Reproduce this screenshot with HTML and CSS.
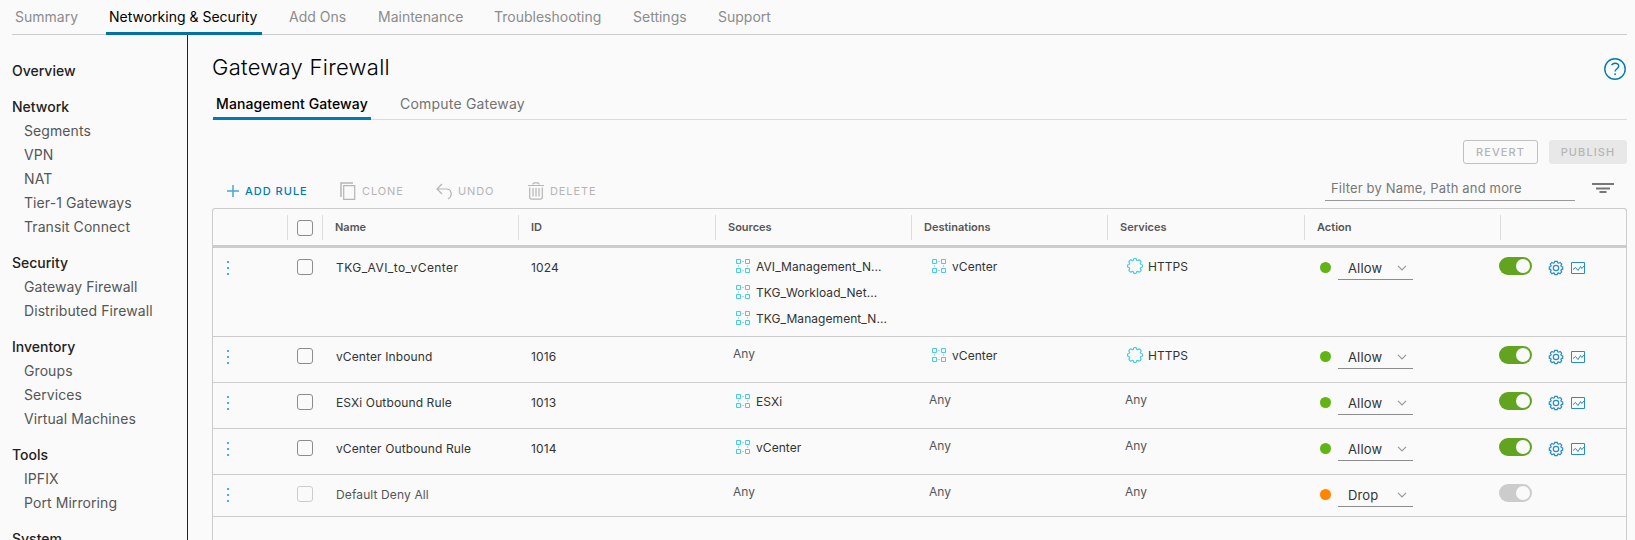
FILE: index.html
```html
<!DOCTYPE html>
<html lang="en">
<head>
<meta charset="utf-8">
<title>Gateway Firewall</title>
<link rel="stylesheet" href="styles.css">
</head>
<body>
<svg class="sprite" aria-hidden="true">
  <symbol id="group" viewBox="0 0 16 16"><g fill="none" stroke="#49cbe0"><path d="M1.500 1.500h4v4h-4zM10.500 1.500h4v4h-4zM1.500 10.500h4v4h-4zM10.500 10.500h4v4h-4z"/><path opacity=".55" d="M7 3.500h2M7 12.500h2M3.500 7v2M12.500 7v2"/></g></symbol>
  <symbol id="service" viewBox="0 0 16 16"><path fill="none" stroke="#49cbe0" stroke-width="1.200" d="M6.500 1.800a1.500 1.300 0 0 1 3 0q.3 1 1.300.8a1.600 1.600 0 0 1 2.600 2.600q-.2 1 .8 1.300a1.300 1.500 0 0 1 0 3q-1 .3-.8 1.300a1.600 1.600 0 0 1-2.600 2.600q-1-.2-1.300.8a1.500 1.300 0 0 1-3 0q-.3-1-1.300-.8a1.600 1.600 0 0 1-2.600-2.600q.2-1-.8-1.300a1.300 1.500 0 0 1 0-3q1-.3.8-1.300a1.600 1.600 0 0 1 2.600-2.600q1 .2 1.300-.8z"/></symbol>
  <symbol id="gear" viewBox="0 0 16 16"><g fill="none" stroke="#2a8cc4"><path stroke-width="1.200" d="M6.700 1.300h2.600l.4 1.500 1 .4 1.400-.8 1.600 1.700-.8 1.400.4 1 1.400.4v2.300l-1.400.4-.4 1 .8 1.400-1.700 1.700-1.400-.8-1 .4-.4 1.400H6.800l-.4-1.400-1-.4-1.400.8L2.300 12l.8-1.400-.4-1-1.400-.4V6.900l1.400-.4.4-1L2.300 4.100 4 2.400l1.400.8 1-.4z"/><circle cx="8" cy="8" r="2.700" stroke-width="1.200"/></g></symbol>
  <symbol id="chart" viewBox="0 0 16 14"><g fill="none" stroke="#2a8cc4"><path d="M1.500 1.500h13v11h-13z"/><path d="M3 8.500 5.500 6.500 8 9.500l2.500-4 1.300 2L14 5"/></g></symbol>
  <symbol id="chevron" viewBox="0 0 10 6"><path fill="none" stroke="#999" stroke-width="1.200" d="m1 .8 4 4 4-4"/></symbol>
</svg>

<nav class="topnav">
  <a class="n1">Summary</a><a class="n2 active">Networking &amp; Security</a><a class="n3">Add Ons</a><a class="n4">Maintenance</a><a class="n5">Troubleshooting</a><a class="n6">Settings</a><a class="n7">Support</a>
</nav>

<div class="body">
  <aside class="sidebar">
    <h4>Overview</h4>
    <h4>Network</h4>
    <a>Segments</a><a>VPN</a><a>NAT</a><a>Tier-1 Gateways</a><a>Transit Connect</a>
    <h4>Security</h4>
    <a>Gateway Firewall</a><a>Distributed Firewall</a>
    <h4>Inventory</h4>
    <a>Groups</a><a>Services</a><a>Virtual Machines</a>
    <h4>Tools</h4>
    <a>IPFIX</a><a>Port Mirroring</a>
    <h4>System</h4>
  </aside>

  <main class="main">
    <header class="title">
      <h1>Gateway Firewall</h1>
      <svg class="help" viewBox="0 0 22 22"><g fill="none" stroke="#0079b8" stroke-width="1.400"><circle cx="11" cy="11" r="10.200"/><path d="M7.500 7.100C8.500 5.800 9.700 5.300 11 5.300c2.200 0 3.700 1.100 3.700 2.800 0 2.700-3.600 2.600-3.600 5.500"/></g><circle cx="11.100" cy="16.200" r=".9" fill="#0079b8"/></svg>
    </header>
    <div class="tabs"><a class="active">Management Gateway</a><a class="second">Compute Gateway</a></div>
    <div class="buttons"><button class="revert">REVERT</button><button class="publish">PUBLISH</button></div>
    <div class="toolbar">
      <span class="tool add"><svg width="12" height="12"><path d="M6 0v12M0 6h12" stroke="#4aa5cf" stroke-width="1.500"/></svg>ADD RULE</span>
      <span class="tool clone"><svg width="16" height="18"><g fill="none" stroke="#b5b5b5"><path d="M1 15V1h12" stroke-width="1.500"/><path d="M3.700 3.700h11v13.600h-11z" stroke-width="1.200"/></g></svg>CLONE</span>
      <span class="tool undo"><svg width="16" height="18"><path fill="none" stroke="#b5b5b5" stroke-width="1.200" d="M6 2 1 7l5 5M1 7h9c6 0 7 7 2 10"/></svg>UNDO</span>
      <span class="tool delete"><svg width="16" height="18"><g fill="none" stroke="#b5b5b5" stroke-width="1.200"><path d="M0 3.500h16M5 2.500q0-1.700 1.500-1.700h3q1.500 0 1.500 1.700"/><path d="M1.700 5.500V15q0 2.200 2 2.200h8.600q2 0 2-2.200V5.500M5 6v8.500M8 6v8.500M11 6v8.500"/></g></svg>DELETE</span>
      <span class="filter">Filter by Name, Path and more</span>
      <svg class="funnel" width="22" height="10"><path d="M0 1h22M4 5.500h14M7.500 9h7" stroke="#777" stroke-width="2"/></svg>
    </div>

    <section class="grid">
      <div class="row head"><div></div><div class="sep"><i class="box"></i></div><div class="sep">Name</div><div class="sep">ID</div><div class="sep">Sources</div><div class="sep">Destinations</div><div class="sep">Services</div><div class="sep">Action</div><div class="sep"></div></div>

      <div class="row tall">
        <div class="dots"><i></i><i></i><i></i></div><div><i class="box"></i></div><div class="name wide">TKG_AVI_to_vCenter</div><div class="id">1024</div>
        <div class="items"><span><svg><use href="#group"/></svg>AVI_Management_N...</span><span><svg><use href="#group"/></svg>TKG_Workload_Net...</span><span><svg><use href="#group"/></svg>TKG_Management_N...</span></div>
        <div class="items"><span><svg><use href="#group"/></svg>vCenter</span></div>
        <div class="items"><span><svg><use href="#service"/></svg>HTTPS</span></div>
        <div class="action"><b></b><span class="select">Allow<svg><use href="#chevron"/></svg></span></div>
        <div class="controls"><i class="toggle"></i><svg class="gear"><use href="#gear"/></svg><svg class="chart"><use href="#chart"/></svg></div>
      </div>

      <div class="row">
        <div class="dots"><i></i><i></i><i></i></div><div><i class="box"></i></div><div class="name">vCenter Inbound</div><div class="id">1016</div>
        <div class="any">Any</div>
        <div class="items"><span><svg><use href="#group"/></svg>vCenter</span></div>
        <div class="items"><span><svg><use href="#service"/></svg>HTTPS</span></div>
        <div class="action"><b></b><span class="select">Allow<svg><use href="#chevron"/></svg></span></div>
        <div class="controls"><i class="toggle"></i><svg class="gear"><use href="#gear"/></svg><svg class="chart"><use href="#chart"/></svg></div>
      </div>

      <div class="row">
        <div class="dots"><i></i><i></i><i></i></div><div><i class="box"></i></div><div class="name">ESXi Outbound Rule</div><div class="id">1013</div>
        <div class="items"><span><svg><use href="#group"/></svg>ESXi</span></div>
        <div class="any">Any</div>
        <div class="any">Any</div>
        <div class="action"><b></b><span class="select">Allow<svg><use href="#chevron"/></svg></span></div>
        <div class="controls"><i class="toggle"></i><svg class="gear"><use href="#gear"/></svg><svg class="chart"><use href="#chart"/></svg></div>
      </div>

      <div class="row">
        <div class="dots"><i></i><i></i><i></i></div><div><i class="box"></i></div><div class="name">vCenter Outbound Rule</div><div class="id">1014</div>
        <div class="items"><span><svg><use href="#group"/></svg>vCenter</span></div>
        <div class="any">Any</div>
        <div class="any">Any</div>
        <div class="action"><b></b><span class="select">Allow<svg><use href="#chevron"/></svg></span></div>
        <div class="controls"><i class="toggle"></i><svg class="gear"><use href="#gear"/></svg><svg class="chart"><use href="#chart"/></svg></div>
      </div>

      <div class="row last">
        <div class="dots"><i></i><i></i><i></i></div><div><i class="box"></i></div><div class="name">Default Deny All</div><div class="id"></div>
        <div class="any">Any</div>
        <div class="any">Any</div>
        <div class="any">Any</div>
        <div class="action drop"><b></b><span class="select">Drop<svg><use href="#chevron"/></svg></span></div>
        <div class="controls"><i class="toggle off"></i></div>
      </div>
    </section>
  </main>
</div>
</body>
</html>
```
FILE: styles.css
```css
* { box-sizing: border-box; }
body { margin: 0; height: 540px; overflow: hidden; background: #fafafa; color: #333; font-family: Inter, "Open Sans", sans-serif; font-size: 14px; display: flex; flex-direction: column; }
svg { display: block; flex: none; }
i { display: block; font-style: normal; }
h1, h4 { margin: 0; }
.sprite { position: absolute; width: 0; height: 0; }

.topnav { display: flex; flex: none; height: 35px; margin: 0 8px 0 12px; border-bottom: 1px solid #ccc; color: #8c8c8c; }
.topnav a { height: 35px; line-height: 34px; padding-left: 3px; white-space: nowrap; }
.topnav .active { color: #000; border-bottom: 3px solid #0072a3; }
.n1 { width: 94px; }
.n2 { width: 156px; margin-right: 24px; }
.n3 { width: 89px; }
.n4 { width: 116px; }
.n5 { width: 139px; }
.n6 { width: 85px; }

.body { display: flex; flex: 1; min-height: 0; }
.sidebar { flex: none; width: 188px; height: 505px; overflow: hidden; padding: 24px 0 0 12px; border-right: 1px solid #222; color: #565656; }
.sidebar h4 { height: 24px; line-height: 24px; font-size: 14px; font-weight: 500; color: #222; margin-bottom: 0; }
.sidebar h4:not(:first-child) { margin-top: 12px; }
.sidebar a { display: block; height: 24px; line-height: 24px; padding-left: 12px; letter-spacing: .080px; }

.main { flex: 1; display: flex; flex-direction: column; padding: 0 8px 0 24px; min-width: 0; }
.title { flex: none; height: 54px; display: flex; justify-content: space-between; padding-top: 18px; }
.title h1 { font-size: 22px; line-height: 28px; font-weight: 300; color: #000; letter-spacing: .280px; }
.help { width: 22px; height: 22px; margin: 5px 1px 0 0; }
.tabs { flex: none; height: 31px; display: flex; border-bottom: 1px solid #dcdcdc; color: #737373; }
.tabs a { height: 31px; line-height: 30px; padding-left: 3px; white-space: nowrap; letter-spacing: .100px; }
.tabs .active { width: 158px; margin-left: 1px; color: #000; font-weight: 500; border-bottom: 3px solid #0079b8; }
.tabs .second { margin-left: 26px; letter-spacing: .200px; }
.buttons { flex: none; display: flex; justify-content: flex-end; gap: 11px; padding-top: 20px; height: 44px; }
button { height: 24px; padding: 0; border-radius: 3px; font: 500 11px/22px Inter, sans-serif; letter-spacing: 1.100px; color: #b5b5b5; background: #fafafa; border: 1px solid #c1c1c1; }
.revert { width: 75px; }
.publish { width: 78px; background: #e8e8e8; border-color: #e8e8e8; }

.toolbar { flex: none; height: 44px; display: flex; align-items: flex-start; padding: 17px 0 0 15px; }
.tool { display: flex; align-items: center; height: 20px; gap: 6px; font-size: 11px; letter-spacing: .900px; color: #b5b5b5; white-space: nowrap; }
.add { width: 113px; color: #0079b8; font-weight: 500; letter-spacing: 1px; }
.clone { width: 96px; }
.undo { width: 92px; }
.delete { width: 200px; }
.filter { margin-left: auto; width: 250px; height: 20px; padding-left: 6px; line-height: 14px; font-size: 13px; letter-spacing: .170px; color: #777; border-bottom: 1px solid #999; white-space: nowrap; }
.funnel { margin: 2px 13px 0 17px; }

.grid { flex: 1; border: 1px solid #ccc; border-bottom: 0; border-radius: 3px 3px 0 0; overflow: hidden; }
.row { display: grid; grid-template-columns: 74px 35px 196px 197px 196px 196px 197px 196px 1fr; height: 46px; border-bottom: 1px solid #ccc; font-size: 12px; }
.tall { height: 89px; }
.last { height: 42px; }
.head { height: 39px; border-bottom: 3px solid #ccc; font-size: 11px; font-weight: 600; color: #565656; }
.head div { height: 25px; margin-top: 6px; line-height: 24px; padding-left: 12px; }
.head .sep { border-left: 1px solid #ddd; }
.box { width: 16px; height: 16px; margin: 11px 0 0 10px; border: 1px solid #8c8c8c; border-radius: 3px; }
.head .box { margin: 5px 0 0 -3px; }
.last .box { border-color: #ccc; }
.dots { padding: 13px 0 0 14px; }
.dots i { width: 2px; height: 2px; background: #49afd9; margin-bottom: 4px; }
.name, .id { padding: 11px 0 0 14px; line-height: 18px; white-space: nowrap; letter-spacing: .120px; }
.name.wide { letter-spacing: .430px; }
.id { padding-left: 13px; }
.last .name { color: #565656; }
.any { padding: 8px 0 0 18px; line-height: 18px; color: #565656; }
.items { padding: 5px 0 0 20px; white-space: nowrap; letter-spacing: .060px; }
.items span { display: flex; align-items: center; gap: 5px; height: 26px; }
.items svg { width: 16px; height: 16px; }
.action { display: flex; padding: 8px 0 0 16px; }
.action b { width: 11px; height: 11px; margin: 6px 7px 0 0; border-radius: 50%; background: #60b515; }
.drop b { background: #ff8400; }
.select { width: 75px; height: 24px; padding: 0 6px 0 10px; display: flex; align-items: center; justify-content: space-between; font-size: 13px; letter-spacing: .150px; border-bottom: 1px solid #8c8c8c; }
.select svg { width: 10px; height: 6px; }
.controls { display: flex; align-items: flex-start; margin-left: -1px; }
.toggle { width: 33px; height: 18px; margin-top: 9px; border-radius: 9px; background: #62a420; padding: 2px 0 0 17px; }
.toggle::after { content: ""; display: block; width: 14px; height: 14px; border-radius: 50%; background: #fafafa; }
.off { background: #ccc; }
.gear { width: 16px; height: 16px; margin: 12px 0 0 16px; }
.chart { width: 16px; height: 14px; margin: 13px 0 0 6px; }
```
